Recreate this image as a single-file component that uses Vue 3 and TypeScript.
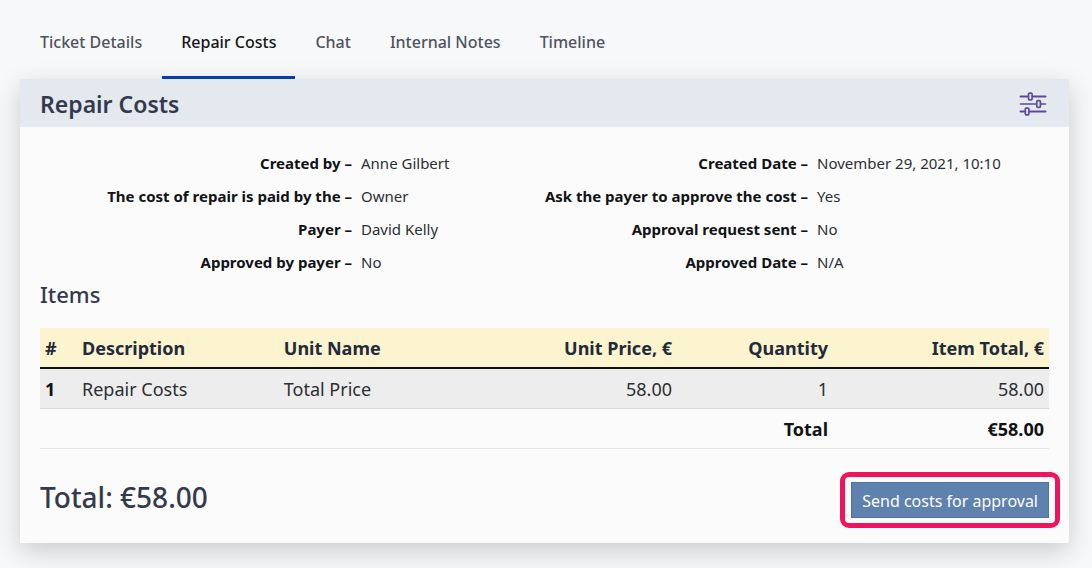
<script setup lang="ts">
import { ref } from 'vue'

interface Detail {
  label: string
  value: string
}

interface Item {
  id: number
  description: string
  unit: string
  price: number
  quantity: number
}

const tabs: string[] = ['Ticket Details', 'Repair Costs', 'Chat', 'Internal Notes', 'Timeline']
const activeTab = ref<string>('Repair Costs')

const details: Detail[] = [
  { label: 'Created by', value: 'Anne Gilbert' },
  { label: 'Created Date', value: 'November 29, 2021, 10:10' },
  { label: 'The cost of repair is paid by the', value: 'Owner' },
  { label: 'Ask the payer to approve the cost', value: 'Yes' },
  { label: 'Payer', value: 'David Kelly' },
  { label: 'Approval request sent', value: 'No' },
  { label: 'Approved by payer', value: 'No' },
  { label: 'Approved Date', value: 'N/A' },
]

const items: Item[] = [
  { id: 1, description: 'Repair Costs', unit: 'Total Price', price: 58, quantity: 1 },
]

const total: string = items.reduce((sum, i) => sum + i.price * i.quantity, 0).toFixed(2)
</script>

<template>
  <main class="page">
    <nav class="tabs" aria-label="Ticket sections">
      <a
        v-for="tab in tabs"
        :key="tab"
        href="#"
        class="tab"
        :class="{ active: tab === activeTab }"
        @click.prevent="activeTab = tab"
      >{{ tab }}</a>
    </nav>

    <section class="panel">
      <header class="panel-head">
        <h1>Repair Costs</h1>
        <button type="button" class="settings" aria-label="Settings">
          <svg width="28" height="24" viewBox="0 0 28 24" fill="none" stroke="#5f4896" stroke-width="2" stroke-linecap="round">
            <path d="M1.500 4.500H9M14 4.500H26.500" />
            <path d="M1.500 12H17M22 12H26.500" stroke-width="1.500" />
            <path d="M1.500 19.500H6M11 19.500H26.500" />
            <rect x="9.500" y="1.200" width="3.600" height="6.600" rx="1" stroke-width="1.700" />
            <rect x="17.800" y="8.700" width="3.600" height="6.600" rx="1" stroke-width="1.700" />
            <rect x="6.300" y="16.200" width="3.600" height="6.600" rx="1" stroke-width="1.700" />
          </svg>
        </button>
      </header>

      <div class="panel-body">
        <dl class="details">
          <template v-for="d in details" :key="d.label">
            <dt>{{ d.label }} –</dt>
            <dd>{{ d.value }}</dd>
          </template>
        </dl>

        <h2>Items</h2>

        <table class="items">
          <colgroup>
            <col class="c-id" />
            <col class="c-desc" />
            <col class="c-unit" />
            <col class="c-price" />
            <col class="c-qty" />
            <col class="c-total" />
          </colgroup>
          <thead>
            <tr>
              <th scope="col">#</th>
              <th scope="col">Description</th>
              <th scope="col">Unit Name</th>
              <th scope="col" class="num">Unit Price, €</th>
              <th scope="col" class="num">Quantity</th>
              <th scope="col" class="num">Item Total, €</th>
            </tr>
          </thead>
          <tbody>
            <tr v-for="item in items" :key="item.id">
              <th scope="row">{{ item.id }}</th>
              <td>{{ item.description }}</td>
              <td>{{ item.unit }}</td>
              <td class="num">{{ item.price.toFixed(2) }}</td>
              <td class="num">{{ item.quantity }}</td>
              <td class="num">{{ (item.price * item.quantity).toFixed(2) }}</td>
            </tr>
          </tbody>
          <tfoot>
            <tr>
              <th scope="row" colspan="5" class="num">Total</th>
              <td class="num">€{{ total }}</td>
            </tr>
          </tfoot>
        </table>

        <footer class="summary">
          <p>Total: €{{ total }}</p>
          <div class="highlight">
            <button type="button" class="send">Send costs for approval</button>
          </div>
        </footer>
      </div>
    </section>
  </main>
</template>

<style>
body {
  background: #f7f8fa;
}
</style>

<style scoped>
.page {
  padding: 8px 23px 25px 20px;
  font-family: "Segoe UI", "Noto Sans", "Open Sans", sans-serif;
  font-size: 15px;
  color: #2b2f34;
}

.tabs {
  display: flex;
  gap: 1px;
  height: 71px;
  padding-left: 1px;
}

.tab {
  box-sizing: border-box;
  padding: 0 19px;
  border-bottom: 3px solid transparent;
  font-size: 16px;
  font-weight: 500;
  line-height: 69px;
  color: #4f535e;
  text-decoration: none;
  white-space: nowrap;
}

.tab.active {
  color: #15171c;
  border-bottom-color: #0540a8;
}

.panel {
  background: #fbfbfb;
  box-shadow: 0 8px 24px rgba(0, 0, 0, 0.18);
}

.panel-head {
  box-sizing: border-box;
  display: flex;
  align-items: center;
  justify-content: space-between;
  height: 48px;
  padding: 1px 22px 0 20px;
  background: #e4e9f0;
}

h1 {
  margin: 0;
  font-size: 23px;
  font-weight: 650;
  color: #343a4e;
}

.settings {
  display: flex;
  padding: 0;
  border: 0;
  background: none;
}

.panel-body {
  padding: 20px 20px 15px;
}

.details {
  display: grid;
  grid-template-columns: minmax(0, 312fr) minmax(0, 174fr) minmax(0, 264fr) minmax(0, 232fr);
  column-gap: 9px;
  margin: 0;
  line-height: 33px;
}

dt {
  font-weight: 700;
  color: #111316;
  text-align: right;
  white-space: nowrap;
}

dd {
  margin: 0;
  white-space: nowrap;
}

h2 {
  margin: 0 0 19px;
  font-size: 22px;
  font-weight: 500;
  line-height: 30px;
  color: #343a4e;
}

.items {
  width: 100%;
  table-layout: fixed;
  border-collapse: collapse;
  font-size: 18px;
  line-height: 29px;
}

.c-id { width: 37px; }
.c-desc { width: 20%; }
.c-unit { width: 20%; }
.c-qty { width: 156px; }
.c-total { width: 216px; }

th,
td {
  padding: 6px 5px 4px;
  text-align: left;
}

th,
tfoot td {
  font-weight: 700;
}

.num {
  text-align: right;
}

thead th {
  background: #fcf3cf;
  color: #232b3a;
  border-bottom: 2px solid #101010;
}

tbody tr {
  background: #ededed;
}

tbody th,
tbody td {
  border-bottom: 1px solid #d5dae0;
}

tfoot th,
tfoot td {
  border-bottom: 1px solid #e2e6ea;
}

tbody th,
tfoot th,
tfoot td {
  color: #111316;
}

.summary {
  display: flex;
  align-items: flex-start;
  justify-content: space-between;
  margin-top: 23px;
}

.summary p {
  margin: 0;
  font-size: 28px;
  font-weight: 500;
  line-height: 50px;
  color: #343a4e;
}

.highlight {
  margin-right: -11px;
  padding: 5px 6px;
  border: 5px solid #f0145e;
  border-radius: 9px;
}

.send {
  display: block;
  height: 36px;
  padding: 2px 10px 0;
  border: 1px solid #4a73a6;
  background: #5e82ad;
  color: #fff;
  font: inherit;
  font-size: 16px;
}
</style>
